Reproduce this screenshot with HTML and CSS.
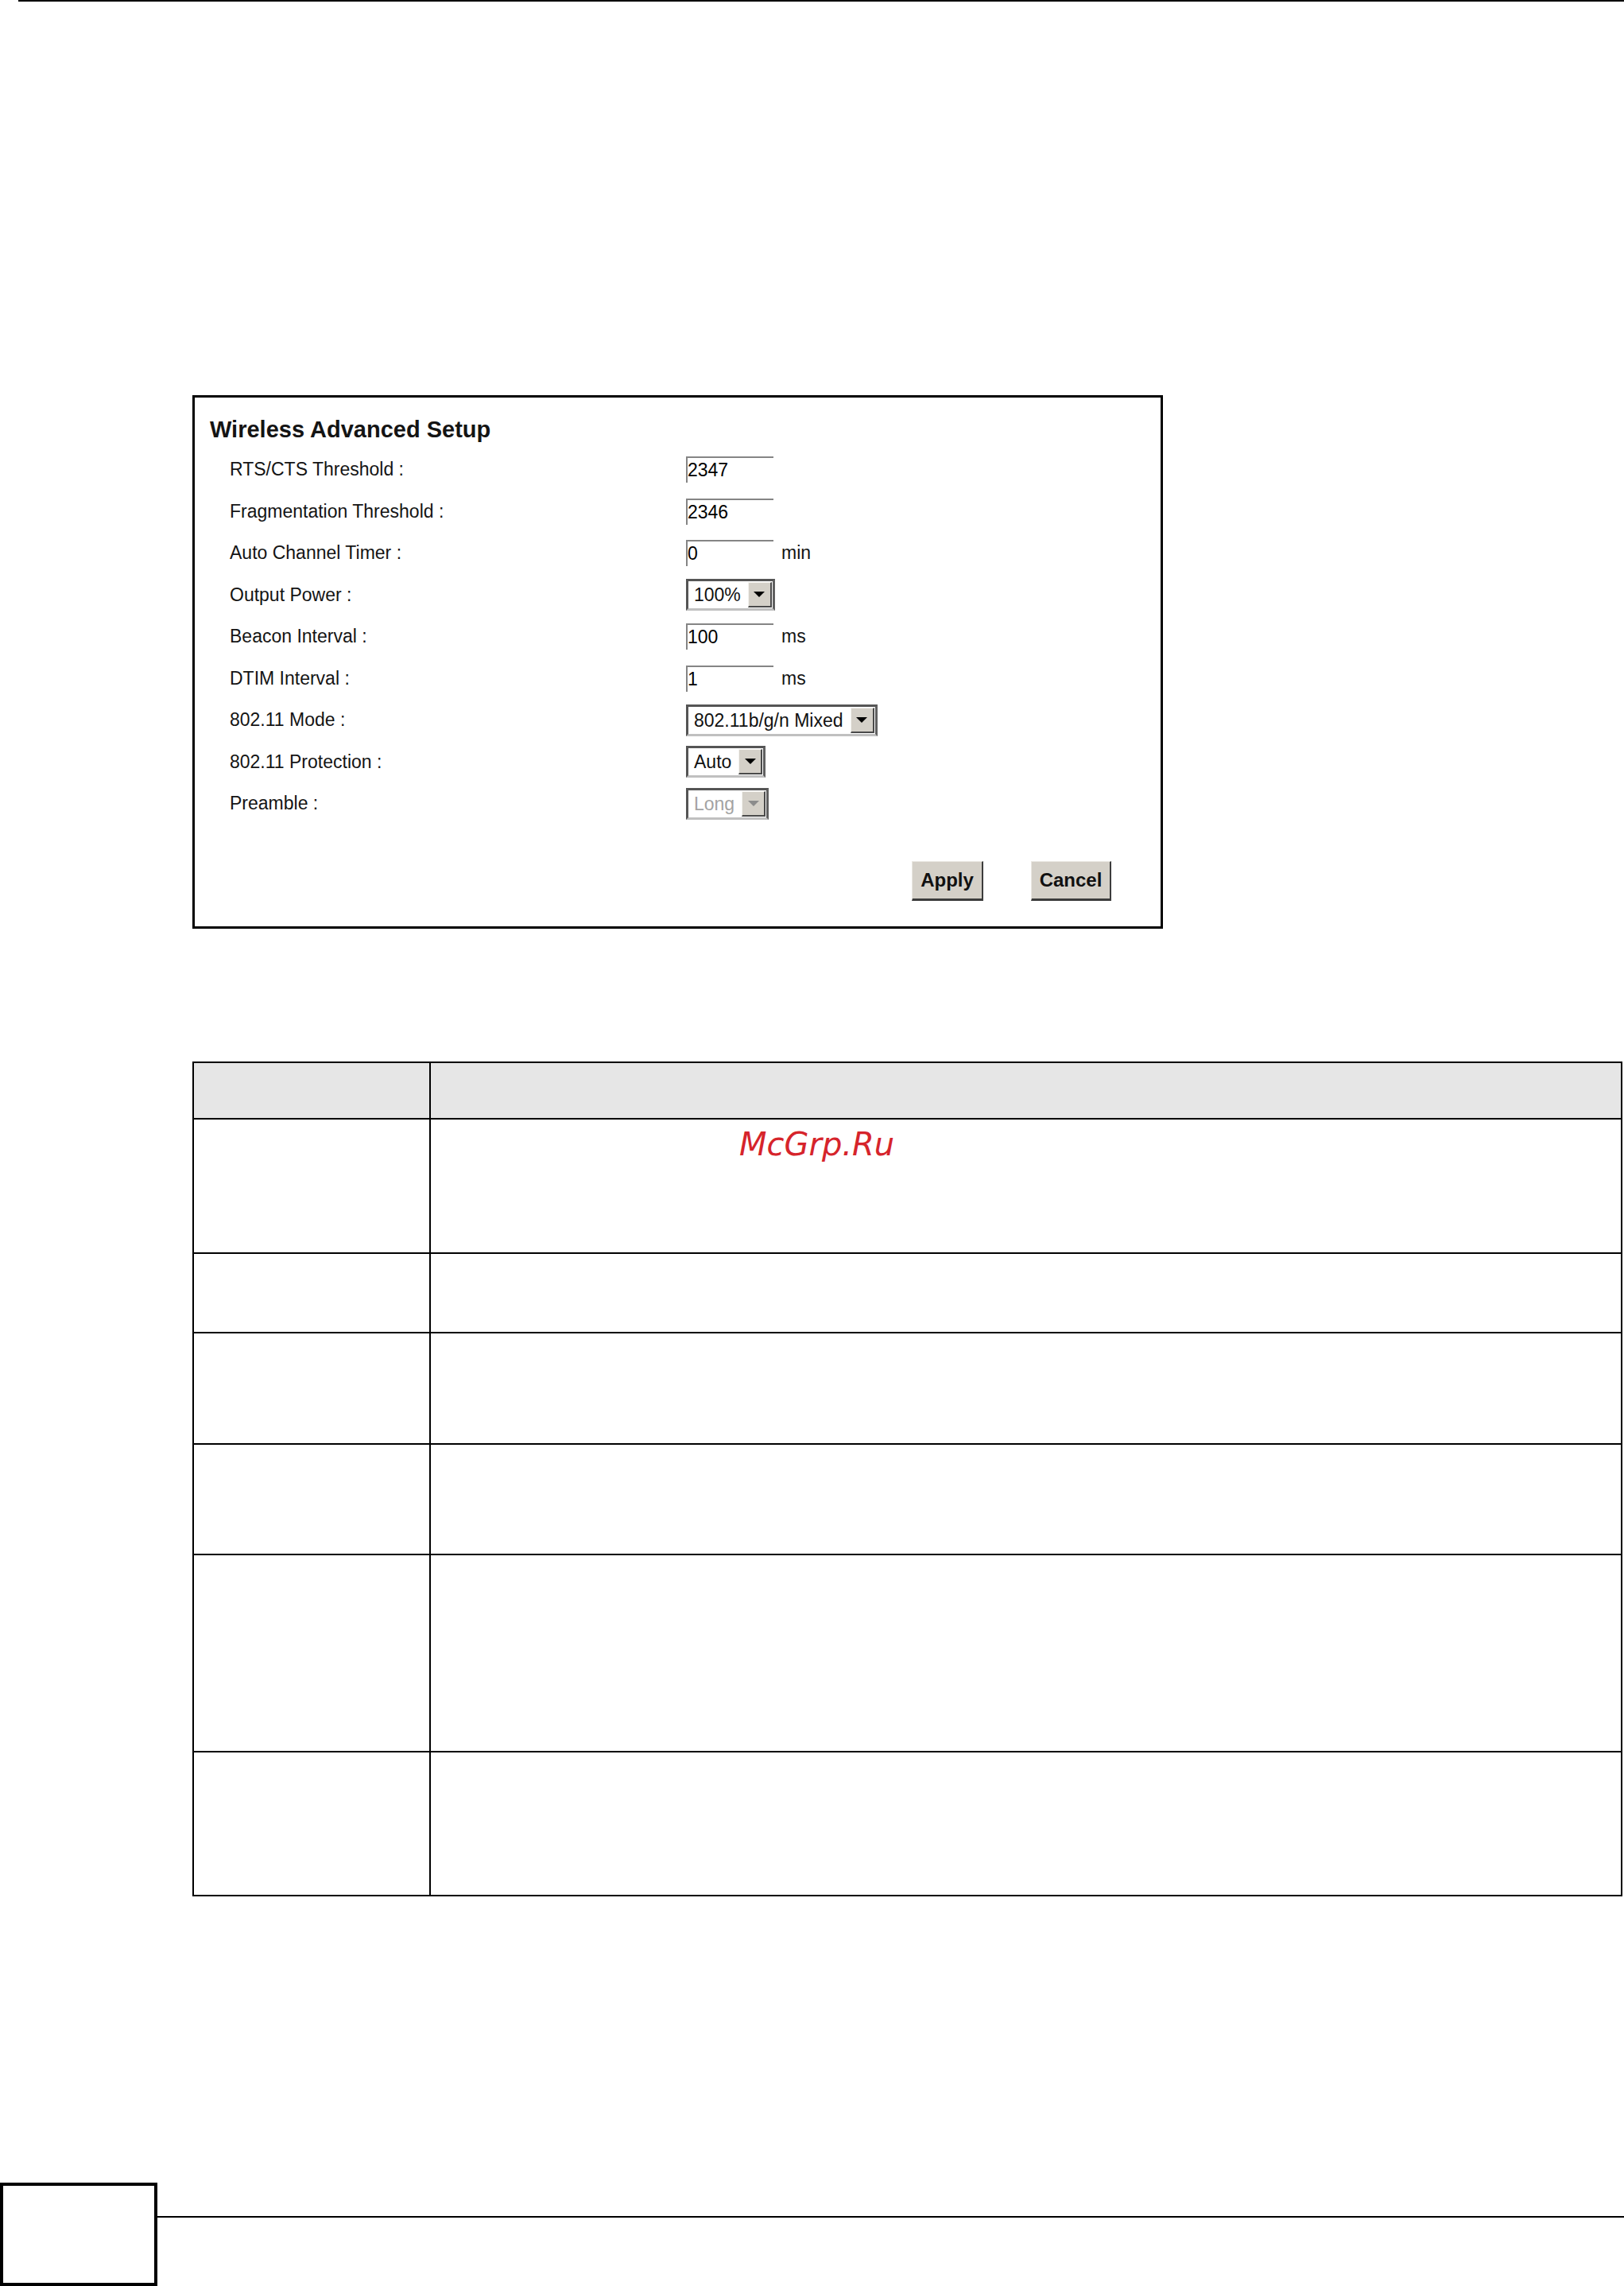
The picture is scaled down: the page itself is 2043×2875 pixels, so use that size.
FILE: index.html
```html
<!DOCTYPE html>
<html lang="en">
<head>
<meta charset="utf-8">
<title>Wireless Advanced Setup</title>
<link rel="stylesheet" href="styles.css">
</head>
<body>
<div class="page">
  <div class="top-rule"></div>

  <div class="shot">
    <div class="shot-title">Wireless Advanced Setup</div>
    <div class="form">
      <div class="row"><span class="lbl">RTS/CTS Threshold :</span><span class="field">2347</span></div>
      <div class="row"><span class="lbl">Fragmentation Threshold :</span><span class="field">2346</span></div>
      <div class="row"><span class="lbl">Auto Channel Timer :</span><span class="field">0</span><span class="unit">min</span></div>
      <div class="row"><span class="lbl">Output Power :</span><span class="sel"><span class="sel-text">100%</span><span class="sel-btn"><span class="arrow"></span></span></span></div>
      <div class="row"><span class="lbl">Beacon Interval :</span><span class="field">100</span><span class="unit">ms</span></div>
      <div class="row"><span class="lbl">DTIM Interval :</span><span class="field">1</span><span class="unit">ms</span></div>
      <div class="row"><span class="lbl">802.11 Mode :</span><span class="sel"><span class="sel-text">802.11b/g/n Mixed</span><span class="sel-btn"><span class="arrow"></span></span></span></div>
      <div class="row"><span class="lbl">802.11 Protection :</span><span class="sel"><span class="sel-text">Auto</span><span class="sel-btn"><span class="arrow"></span></span></span></div>
      <div class="row"><span class="lbl">Preamble :</span><span class="sel sel-disabled"><span class="sel-text">Long</span><span class="sel-btn"><span class="arrow"></span></span></span></div>
    </div>
    <div class="actions">
      <span class="btn btn-apply">Apply</span>
      <span class="btn btn-cancel">Cancel</span>
    </div>
  </div>

  <div class="table">
    <div class="trow thead h-head"><div class="cell c-label"></div><div class="cell"></div></div>
    <div class="trow h-1"><div class="cell c-label"></div><div class="cell"><span class="watermark">McGrp.Ru</span></div></div>
    <div class="trow h-2"><div class="cell c-label"></div><div class="cell"></div></div>
    <div class="trow h-3"><div class="cell c-label"></div><div class="cell"></div></div>
    <div class="trow h-4"><div class="cell c-label"></div><div class="cell"></div></div>
    <div class="trow h-5"><div class="cell c-label"></div><div class="cell"></div></div>
    <div class="trow h-6"><div class="cell c-label"></div><div class="cell"></div></div>
  </div>

  <div class="footer">
    <div class="page-box"></div>
    <div class="footer-rule"></div>
  </div>
</div>
</body>
</html>
```

FILE: styles.css
```css
html, body {
  margin: 0;
  padding: 0;
  background: #ffffff;
}

body {
  font-family: "Liberation Sans", Arial, sans-serif;
  color: #111111;
  overflow: hidden;
}

.page {
  width: 2043px;
  height: 2875px;
  display: flex;
  flex-direction: column;
}

.top-rule {
  height: 2px;
  margin-left: 23px;
  background: #000000;
  flex: none;
}

/* ---------- screenshot box ---------- */
.shot {
  box-sizing: border-box;
  width: 1221px;
  height: 671px;
  margin: 495px 0 0 242px;
  border: 3px solid #000000;
  padding: 24px 0 0 19px;
  flex: none;
}

.shot-title {
  font-size: 29px;
  line-height: 32px;
  font-weight: bold;
  color: #141414;
}

.form {
  margin-top: 8.5px;
  padding-left: 25px;
}

.row {
  display: flex;
  align-items: center;
  height: 52.5px;
  font-size: 23px;
}

.lbl {
  flex: none;
  width: 574px;
  white-space: nowrap;
  color: #141414;
}

.field {
  box-sizing: border-box;
  display: inline-block;
  width: 110px;
  height: 33px;
  border-top: 2px solid #858585;
  border-left: 2px solid #858585;
  line-height: 31px;
  padding-left: 0;
  color: #000000;
  flex: none;
}

.unit {
  margin-left: 10px;
  color: #141414;
}

.sel {
  box-sizing: border-box;
  display: inline-flex;
  height: 40px;
  border-style: solid;
  border-width: 3px;
  border-color: #555555 #606060 #c0c0c0 #555555;
  background: #ffffff;
  flex: none;
}

.sel-text {
  padding: 0 9px 0 7px;
  line-height: 34px;
  color: #111111;
  white-space: nowrap;
}

.sel-btn {
  box-sizing: border-box;
  width: 30px;
  margin: 1px 1px 1px 0;
  background: #d4d0c8;
  border-style: solid;
  border-width: 1px 2px 2px 1px;
  border-color: #f4f3ef #4a4a4a #4a4a4a #f4f3ef;
  display: flex;
  align-items: center;
  justify-content: center;
}

.arrow {
  width: 0;
  height: 0;
  border-left: 7px solid transparent;
  border-right: 7px solid transparent;
  border-top: 7px solid #000000;
}

.sel-disabled .sel-text {
  color: #a3a3a3;
}

.sel-disabled .arrow {
  border-top-color: #8c8c8c;
}

.actions {
  display: flex;
  justify-content: flex-end;
  gap: 60px;
  margin-top: 46px;
  padding-right: 62px;
}

.btn {
  box-sizing: border-box;
  display: flex;
  align-items: center;
  justify-content: center;
  height: 50px;
  background: #d4d0c8;
  border-style: solid;
  border-width: 1px 2px 3px 1px;
  border-color: #e9e7e1 #3c3c3c #3c3c3c #e9e7e1;
  font-size: 24px;
  font-weight: bold;
  color: #111111;
}

.btn-apply {
  width: 90px;
}

.btn-cancel {
  width: 101px;
}

/* ---------- description table ---------- */
.table {
  box-sizing: border-box;
  width: 1799px;
  margin: 167px 0 0 242px;
  border-top: 2px solid #000000;
  border-left: 2px solid #000000;
  border-right: 2px solid #000000;
  flex: none;
}

.trow {
  box-sizing: border-box;
  display: grid;
  grid-template-columns: 298px 1fr;
  border-bottom: 2px solid #000000;
}

.thead {
  background: #e6e6e6;
}

.cell {
  box-sizing: border-box;
}

.c-label {
  border-right: 2px solid #000000;
}

.h-head { height: 71px; }
.h-1 { height: 169px; }
.h-2 { height: 100px; }
.h-3 { height: 140px; }
.h-4 { height: 139px; }
.h-5 { height: 248px; }
.h-6 { height: 181px; }

.h-1 .cell:last-child {
  padding: 8px 0 0 388px;
}

.watermark {
  font-family: "DejaVu Sans", sans-serif;
  font-style: italic;
  font-size: 40px;
  line-height: 47px;
  color: #d6242b;
}

/* ---------- footer ---------- */
.footer {
  display: flex;
  align-items: flex-start;
  margin-top: 360px;
  flex: none;
}

.page-box {
  box-sizing: border-box;
  width: 198px;
  height: 130px;
  border: 4px solid #000000;
  flex: none;
}

.footer-rule {
  flex: 1;
  height: 2px;
  margin-top: 42px;
  background: #000000;
}
```
